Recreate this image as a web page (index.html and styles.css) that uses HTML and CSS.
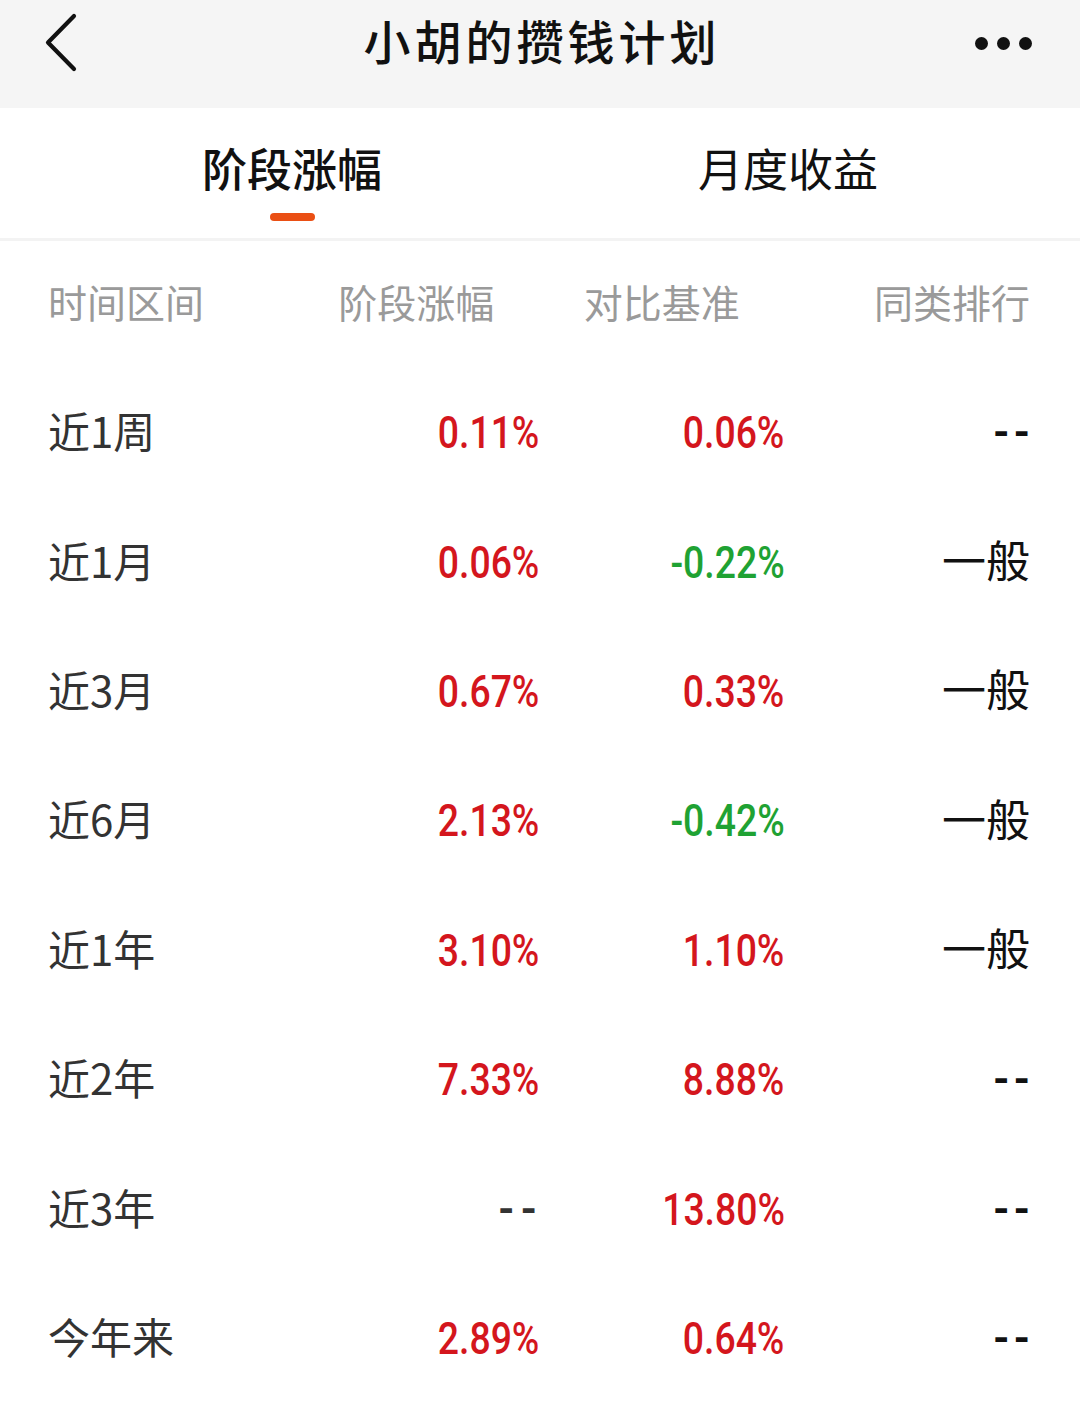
FILE: index.html
```html
<!DOCTYPE html>
<html lang="zh-CN">
<head>
<meta charset="utf-8">
<title>小胡的攒钱计划</title>
<link rel="stylesheet" href="styles.css">
</head>
<body>
<div class="page">
  <header class="topbar">
    <svg class="back" width="40" height="60" viewBox="0 0 40 60"><path d="M31 3 L5 29.5 L31 56" fill="none" stroke="#111" stroke-width="4.2" stroke-linecap="round" stroke-linejoin="round"/></svg>
    <h1 class="title">小胡的攒钱计划</h1>
    <div class="more"><span></span><span></span><span></span></div>
  </header>
  <nav class="tabs">
    <div class="tab active"><span class="tab-text">阶段涨幅</span><i class="bar"></i></div>
    <div class="tab"><span class="tab-text">月度收益</span><i class="bar"></i></div>
  </nav>
  <section class="table">
    <div class="row head">
      <div class="c1">时间区间</div><div class="c2">阶段涨幅</div><div class="c3">对比基准</div><div class="c4">同类排行</div>
    </div>
    <div class="row">
      <div class="c1 label">近1周</div><div class="c2"><span class="num up">0.11%</span></div><div class="c3"><span class="num up">0.06%</span></div><div class="c4"><span class="dash">--</span></div>
    </div>
    <div class="row">
      <div class="c1 label">近1月</div><div class="c2"><span class="num up">0.06%</span></div><div class="c3"><span class="num down">-0.22%</span></div><div class="c4 rank">一般</div>
    </div>
    <div class="row">
      <div class="c1 label">近3月</div><div class="c2"><span class="num up">0.67%</span></div><div class="c3"><span class="num up">0.33%</span></div><div class="c4 rank">一般</div>
    </div>
    <div class="row">
      <div class="c1 label">近6月</div><div class="c2"><span class="num up">2.13%</span></div><div class="c3"><span class="num down">-0.42%</span></div><div class="c4 rank">一般</div>
    </div>
    <div class="row">
      <div class="c1 label">近1年</div><div class="c2"><span class="num up">3.10%</span></div><div class="c3"><span class="num up">1.10%</span></div><div class="c4 rank">一般</div>
    </div>
    <div class="row">
      <div class="c1 label">近2年</div><div class="c2"><span class="num up">7.33%</span></div><div class="c3"><span class="num up">8.88%</span></div><div class="c4"><span class="dash">--</span></div>
    </div>
    <div class="row">
      <div class="c1 label">近3年</div><div class="c2"><span class="dash gray">--</span></div><div class="c3"><span class="num up">13.80%</span></div><div class="c4"><span class="dash">--</span></div>
    </div>
    <div class="row">
      <div class="c1 label">今年来</div><div class="c2"><span class="num up">2.89%</span></div><div class="c3"><span class="num up">0.64%</span></div><div class="c4"><span class="dash">--</span></div>
    </div>
  </section>
</div>
</body>
</html>
```

FILE: styles.css
```css
html, body {
  margin: 0;
  padding: 0;
  background: #ffffff;
}
body {
  font-family: "Noto Sans CJK SC", "Noto Sans", sans-serif;
  color: #111;
}
.page {
  width: 1080px;
}
.topbar {
  height: 108px;
  background: #f5f5f5;
  display: flex;
  align-items: center;
  justify-content: space-between;
  padding: 0 48px 0 43px;
  box-sizing: border-box;
  position: relative;
}
.back {
  display: block;
  margin-top: -22px;
}
.title {
  margin: 0;
  font-size: 47px;
  font-weight: 500;
  letter-spacing: 4px;
  text-indent: 4px;
  color: #111;
  position: absolute;
  left: 0;
  right: 0;
  top: 0;
  text-align: center;
  line-height: 80px;
  pointer-events: none;
}
.more {
  display: flex;
  gap: 9px;
  margin-top: -22px;
}
.more span {
  width: 13px;
  height: 13px;
  border-radius: 50%;
  background: #111;
}
.tabs {
  display: flex;
  padding: 0 44px;
  height: 130px;
  border-bottom: 3px solid #f3f3f3;
}
.tab {
  flex: 1;
  display: flex;
  flex-direction: column;
  align-items: center;
  padding-top: 30px;
}
.tab-text {
  font-size: 45px;
  line-height: 60px;
  color: #111;
  font-weight: 400;
}
.tab.active .tab-text {
  font-weight: 500;
}
.bar {
  display: block;
  width: 45px;
  height: 8px;
  border-radius: 4px;
  margin-top: 15px;
  background: transparent;
}
.tab.active .bar {
  background: #ea4f14;
}
.table {
  padding: 0 50px 0 48px;
}
.row {
  display: grid;
  grid-template-columns: repeat(4, 1fr);
  align-items: center;
  height: 129.4px;
  box-sizing: border-box;
  padding-bottom: 8px;
}
.row.head {
  height: 128px;
  font-size: 39px;
  color: #9a9a9a;
}
.row.head .c2, .row.head .c3 {
  text-align: center;
}
.c1 { text-align: left; }
.c2, .c3, .c4 { text-align: right; }
.label {
  font-size: 42px;
  color: #333;
}
.num {
  display: inline-block;
  font-family: "Roboto", sans-serif;
  font-size: 45px;
  font-weight: 500;
  padding-top: 6px;
  transform: scaleX(0.83);
  transform-origin: right center;
}
.up { color: #d4161d; }
.down { color: #1fa233; }
.rank {
  font-size: 44px;
  color: #111;
}
.dash {
  display: inline-block;
  font-family: "Roboto", sans-serif;
  font-size: 42px;
  font-weight: 700;
  color: #111;
  letter-spacing: 4px;
  margin-right: -4px;
  padding-top: 6px;
}
.dash.gray {
  color: #333;
  letter-spacing: 6px;
  margin-right: -4px;
}
```
